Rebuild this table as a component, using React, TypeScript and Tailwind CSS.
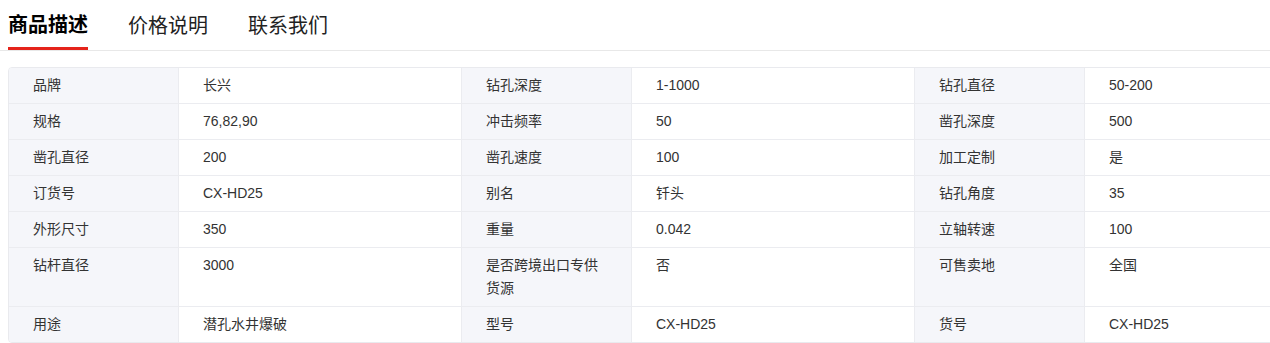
import React from "react";

const rows: [string, string, string, string, string, string][] = [
  ["品牌", "长兴", "钻孔深度", "1-1000", "钻孔直径", "50-200"],
  ["规格", "76,82,90", "冲击频率", "50", "凿孔深度", "500"],
  ["凿孔直径", "200", "凿孔速度", "100", "加工定制", "是"],
  ["订货号", "CX-HD25", "别名", "钎头", "钻孔角度", "35"],
  ["外形尺寸", "350", "重量", "0.042", "立轴转速", "100"],
  ["钻杆直径", "3000", "是否跨境出口专供货源", "否", "可售卖地", "全国"],
  ["用途", "潜孔水井爆破", "型号", "CX-HD25", "货号", "CX-HD25"],
];

export default function App() {
  return (
    <div
      className="w-[1270px] h-[343px] overflow-hidden bg-white text-[#333]"
      style={{ fontFamily: '"Liberation Sans", "Noto Sans CJK SC", sans-serif' }}
    >
      <div className="flex gap-10 pl-2 border-b border-[#e8e8e8]">
        <div className="h-[50px] flex items-center border-b-[3px] border-[#e5231b] pt-[3px] text-[20px] font-bold text-black">
          商品描述
        </div>
        <div className="h-[50px] flex items-center pt-[2px] pb-[1px] text-[20px] text-[#222]">价格说明</div>
        <div className="h-[50px] flex items-center pt-[2px] pb-[1px] text-[20px] text-[#222]">联系我们</div>
      </div>
      <div className="ml-2 mt-4 w-[1370px] border border-[#e9eaee] rounded-[4px] overflow-hidden">
        {rows.map((r, i) => (
          <div
            key={i}
            className={
              "grid grid-cols-[170px_283px_170px_283px_170px_283px] text-[14px] leading-[23px] " +
              (i < rows.length - 1 ? "border-b border-[#ebecf0]" : "")
            }
          >
            {r.map((c, j) => (
              <div
                key={j}
                className={
                  "px-6 py-[6px] border-r border-[#ebecf0] " +
                  (j % 2 === 0 ? "bg-[#f5f6fa] pr-8" : "bg-white")
                }
              >
                {c}
              </div>
            ))}
          </div>
        ))}
      </div>
    </div>
  );
}
